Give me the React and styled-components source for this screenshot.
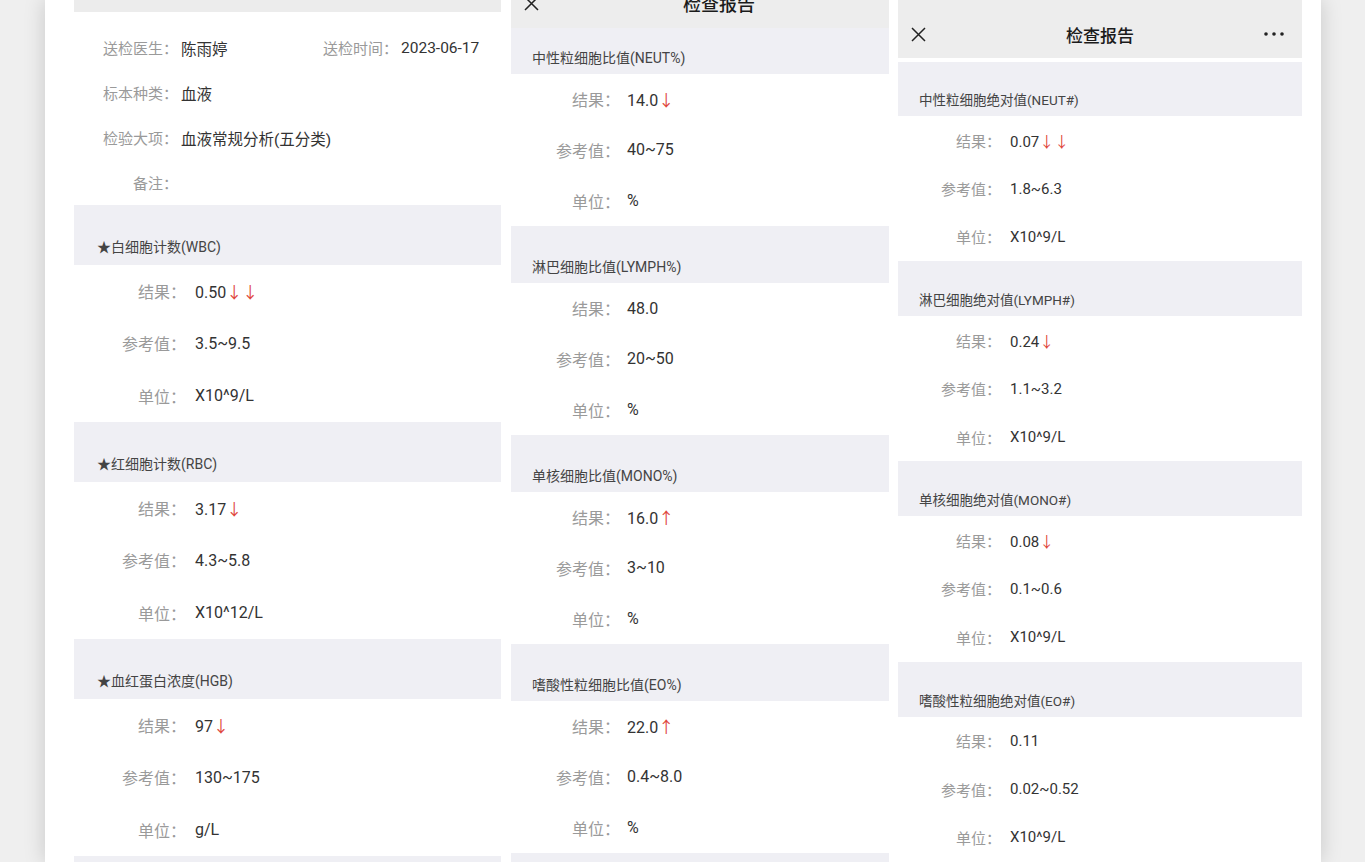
import styled, { createGlobalStyle } from "styled-components";

const GlobalStyle = createGlobalStyle`
  html, body {
    margin: 0;
    padding: 0;
    height: 862px;
    overflow: hidden;
    background: #efefef;
  }
  body {
    font-family: Roboto, "Noto Sans CJK SC", sans-serif;
  }
`;

const Page = styled.div`
  height: 862px;
  padding-left: 45px;
  display: flex;
  background: #efefef;
`;

const Sheet = styled.div`
  flex: none;
  width: 1276px;
  height: 862px;
  box-sizing: border-box;
  padding-left: 29px;
  display: flex;
  background: #fff;
  box-shadow: 0 0 20px rgba(0, 0, 0, 0.17);
`;

const Column = styled.section`
  flex: none;
  width: ${(p) => p.$w}px;
  margin-left: ${(p) => p.$ml || 0}px;
  height: 862px;
  display: flex;
  flex-direction: column;
  overflow: hidden;
`;

const TopStrip = styled.div`
  flex: none;
  height: 12px;
  background: #ececec;
`;

const InfoBlock = styled.div`
  flex: none;
  padding-top: 13px;
  font-size: 15px;
`;

const InfoRow = styled.div`
  height: 45px;
  display: flex;
  align-items: center;
`;

const InfoPair = styled.div`
  display: flex;
  align-items: center;
  flex: none;
  width: ${(p) => (p.$w ? `${p.$w}px` : "auto")};
`;

const InfoLabel = styled.span`
  flex: none;
  width: 104px;
  text-align: right;
  color: #9a9a9a;
`;

const InfoValue = styled.span`
  margin-left: 3px;
  font-size: 15.5px;
  color: #333;
`;

const NavBar = styled.div`
  flex: none;
  height: ${(p) => p.$h}px;
  margin-bottom: ${(p) => p.$mb || 0}px;
  background: #ededed;
  overflow: hidden;
`;

const NavInner = styled.div`
  height: 48px;
  margin-top: ${(p) => p.$top}px;
  display: grid;
  grid-template-columns: 60px 1fr 60px;
  align-items: center;
`;

const NavClose = styled.div`
  padding-left: 13px;
  display: flex;
  align-items: center;
`;

const NavTitle = styled.div`
  text-align: center;
  padding-left: ${(p) => p.$shift || 0}px;
  font-size: ${(p) => p.$fs}px;
  font-weight: 500;
  color: #1b1b1b;
  white-space: nowrap;
`;

const NavMore = styled.div`
  display: flex;
  justify-content: flex-end;
  padding-right: 18px;
`;

const SectionHead = styled.div`
  flex: none;
  height: ${(p) => p.$h}px;
  box-sizing: border-box;
  display: flex;
  align-items: flex-end;
  padding: 0 0 ${(p) => p.$pb}px ${(p) => p.$pl}px;
  background: #efeff4;
  font-size: ${(p) => p.$fs}px;
  line-height: 20px;
  color: #444;
  white-space: nowrap;
`;

const Row = styled.div`
  flex: none;
  height: ${(p) => p.$h}px;
  display: flex;
  align-items: center;
`;

const Label = styled.span`
  flex: none;
  width: ${(p) => p.$w}px;
  text-align: right;
  font-size: ${(p) => p.$fs}px;
  color: #9a9a9a;
`;

const Value = styled.span`
  margin-left: ${(p) => p.$gap}px;
  font-size: ${(p) => p.$fs}px;
  color: #333;
  white-space: nowrap;
`;

const Arrow = styled.span`
  font-family: "Noto Sans CJK SC", sans-serif;
  color: #e0473d;
`;

const CloseIcon = () => (
  <svg width="15" height="15" viewBox="0 0 15 15">
    <path d="M1 1L14 14M14 1L1 14" stroke="#222" strokeWidth="1.5" fill="none" />
  </svg>
);

const MoreIcon = () => (
  <svg width="20" height="4" viewBox="0 0 20 4">
    <circle cx="2" cy="2" r="1.8" fill="#222" />
    <circle cx="10" cy="2" r="1.8" fill="#222" />
    <circle cx="18" cy="2" r="1.8" fill="#222" />
  </svg>
);

// the last entry of every column only peeks in at the bottom edge
const col1 = [
  { title: "★白细胞计数(WBC)", result: "0.50", flag: "↓↓", ref: "3.5~9.5", unit: "X10^9/L" },
  { title: "★红细胞计数(RBC)", result: "3.17", flag: "↓", ref: "4.3~5.8", unit: "X10^12/L" },
  { title: "★血红蛋白浓度(HGB)", result: "97", flag: "↓", ref: "130~175", unit: "g/L" },
  { stub: true },
];

const col2 = [
  { title: "中性粒细胞比值(NEUT%)", result: "14.0", flag: "↓", ref: "40~75", unit: "%" },
  { title: "淋巴细胞比值(LYMPH%)", result: "48.0", flag: "", ref: "20~50", unit: "%" },
  { title: "单核细胞比值(MONO%)", result: "16.0", flag: "↑", ref: "3~10", unit: "%" },
  { title: "嗜酸性粒细胞比值(EO%)", result: "22.0", flag: "↑", ref: "0.4~8.0", unit: "%" },
  { stub: true },
];

const col3 = [
  { title: "中性粒细胞绝对值(NEUT#)", result: "0.07", flag: "↓↓", ref: "1.8~6.3", unit: "X10^9/L" },
  { title: "淋巴细胞绝对值(LYMPH#)", result: "0.24", flag: "↓", ref: "1.1~3.2", unit: "X10^9/L" },
  { title: "单核细胞绝对值(MONO#)", result: "0.08", flag: "↓", ref: "0.1~0.6", unit: "X10^9/L" },
  { title: "嗜酸性粒细胞绝对值(EO#)", result: "0.11", flag: "", ref: "0.02~0.52", unit: "X10^9/L" },
  { stub: true },
];

const styles = {
  a: { headH: 60, firstH: 60, pb: 8, pl: 23, titleFs: 14, rowH: 52.33, labelW: 112, gap: 9, fs: 16 },
  b: { headH: 57, firstH: 46, pb: 6, pl: 21, titleFs: 14, rowH: 50.67, labelW: 109, gap: 7, fs: 16 },
  c: { headH: 55, firstH: 54, pb: 6, pl: 21, titleFs: 13.5, rowH: 48.4, labelW: 103, gap: 9, fs: 15 },
};

function Item({ item, s, first }) {
  const head = (
    <SectionHead $h={first ? s.firstH : s.headH} $pb={s.pb} $pl={s.pl} $fs={s.titleFs}>
      {item.title}
    </SectionHead>
  );
  if (item.stub) return head;

  const rows = [
    ["结果：", item.result, item.flag],
    ["参考值：", item.ref, ""],
    ["单位：", item.unit, ""],
  ];
  return (
    <>
      {head}
      {rows.map(([label, value, flag]) => (
        <Row key={label} $h={s.rowH}>
          <Label $w={s.labelW} $fs={s.fs}>{label}</Label>
          <Value $gap={s.gap} $fs={s.fs}>
            {value}
            {flag && <Arrow>{flag}</Arrow>}
          </Value>
        </Row>
      ))}
    </>
  );
}

export default function App() {
  return (
    <>
      <GlobalStyle />
      <Page>
        <Sheet>
          <Column $w={427}>
            <TopStrip />
            <InfoBlock>
              <InfoRow>
                <InfoPair $w={220}>
                  <InfoLabel>送检医生：</InfoLabel>
                  <InfoValue>陈雨婷</InfoValue>
                </InfoPair>
                <InfoPair>
                  <InfoLabel>送检时间：</InfoLabel>
                  <InfoValue>2023-06-17</InfoValue>
                </InfoPair>
              </InfoRow>
              <InfoRow>
                <InfoPair>
                  <InfoLabel>标本种类：</InfoLabel>
                  <InfoValue>血液</InfoValue>
                </InfoPair>
              </InfoRow>
              <InfoRow>
                <InfoPair>
                  <InfoLabel>检验大项：</InfoLabel>
                  <InfoValue>血液常规分析(五分类)</InfoValue>
                </InfoPair>
              </InfoRow>
              <InfoRow>
                <InfoPair>
                  <InfoLabel>备注：</InfoLabel>
                  <InfoValue></InfoValue>
                </InfoPair>
              </InfoRow>
            </InfoBlock>
            {col1.map((it, i) => (
              <Item key={i} item={it} s={styles.a} />
            ))}
          </Column>

          <Column $w={378} $ml={10}>
            <NavBar $h={28}>
              <NavInner $top={-21}>
                <NavClose>
                  <CloseIcon />
                </NavClose>
                <NavTitle $fs={18} $shift={38}>检查报告</NavTitle>
                <div />
              </NavInner>
            </NavBar>
            {col2.map((it, i) => (
              <Item key={i} item={it} s={styles.b} first={i === 0} />
            ))}
          </Column>

          <Column $w={404} $ml={9}>
            <NavBar $h={58} $mb={4}>
              <NavInner $top={10}>
                <NavClose>
                  <CloseIcon />
                </NavClose>
                <NavTitle $fs={17}>检查报告</NavTitle>
                <NavMore>
                  <MoreIcon />
                </NavMore>
              </NavInner>
            </NavBar>
            {col3.map((it, i) => (
              <Item key={i} item={it} s={styles.c} first={i === 0} />
            ))}
          </Column>
        </Sheet>
      </Page>
    </>
  );
}
